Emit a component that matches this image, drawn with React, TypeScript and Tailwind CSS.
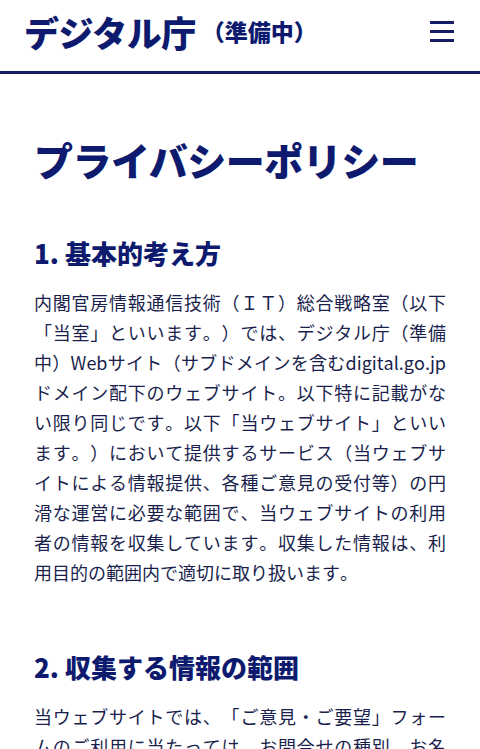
const jp = { fontFamily: '"Noto Sans CJK JP", "Noto Sans", sans-serif' };

function Header() {
  return (
    <header className="flex h-[74px] items-center justify-between border-b-[3px] border-[#141c66] px-6 pb-[8px]">
      <a href="#" className="flex items-center text-[#0d1a6e]">
        <span className="text-[35px] font-black leading-none tracking-[-0.5px]">デジタル庁</span>
        <span className="ml-[6px] text-[23px] font-black leading-none">（準備中）</span>
      </a>
      <button type="button" aria-label="メニュー" className="mr-[-2px] flex h-8 w-8 flex-col items-center justify-center gap-[6px]">
        <span className="block h-[3px] w-6 bg-[#141c66]" />
        <span className="block h-[3px] w-6 bg-[#141c66]" />
        <span className="block h-[3px] w-6 bg-[#141c66]" />
      </button>
    </header>
  );
}

function SectionHeading({ children }: { children: React.ReactNode }) {
  return <h2 className="text-[26px] font-black leading-[40px] text-[#0d1a6e]">{children}</h2>;
}

function Paragraph({ children }: { children: React.ReactNode }) {
  return (
    <p className="mt-[14px] text-justify text-[18px] leading-[30px] text-[#1a1f4d] [font-kerning:none] [font-feature-settings:'kern'_0]">
      {children}
    </p>
  );
}

export default function App() {
  return (
    <div className="min-h-screen bg-white [text-spacing-trim:space-all]" style={jp}>
      <Header />
      <main className="px-[34px] pt-[57px] pb-10">
        <h1 className="text-[39px] font-black leading-[56px] tracking-[-0.5px] text-[#0d1a6e]">プライバシーポリシー</h1>

        <section className="mt-[46px]">
          <SectionHeading>1. 基本的考え方</SectionHeading>
          <Paragraph>
            内閣官房情報通信技術（ＩＴ）総合戦略室（以下「当室」といいます。）では、デジタル庁（準備中）Webサイト（サブドメインを含むdigital.go.jpドメイン配下のウェブサイト。以下特に記載がない限り同じです。以下「当ウェブサイト」といいます。）において提供するサービス（当ウェブサイトによる情報提供、各種ご意見の受付等）の円滑な運営に必要な範囲で、当ウェブサイトの利用者の情報を収集しています。収集した情報は、利用目的の範囲内で適切に取り扱います。
          </Paragraph>
        </section>

        <section className="mt-[60px]">
          <SectionHeading>2. 収集する情報の範囲</SectionHeading>
          <Paragraph>
            当ウェブサイトでは、「ご意見・ご要望」フォームのご利用に当たっては、お問合せの種別、お名前、メールアドレス等の情報をご入力いただいています。
          </Paragraph>
        </section>
      </main>
    </div>
  );
}
